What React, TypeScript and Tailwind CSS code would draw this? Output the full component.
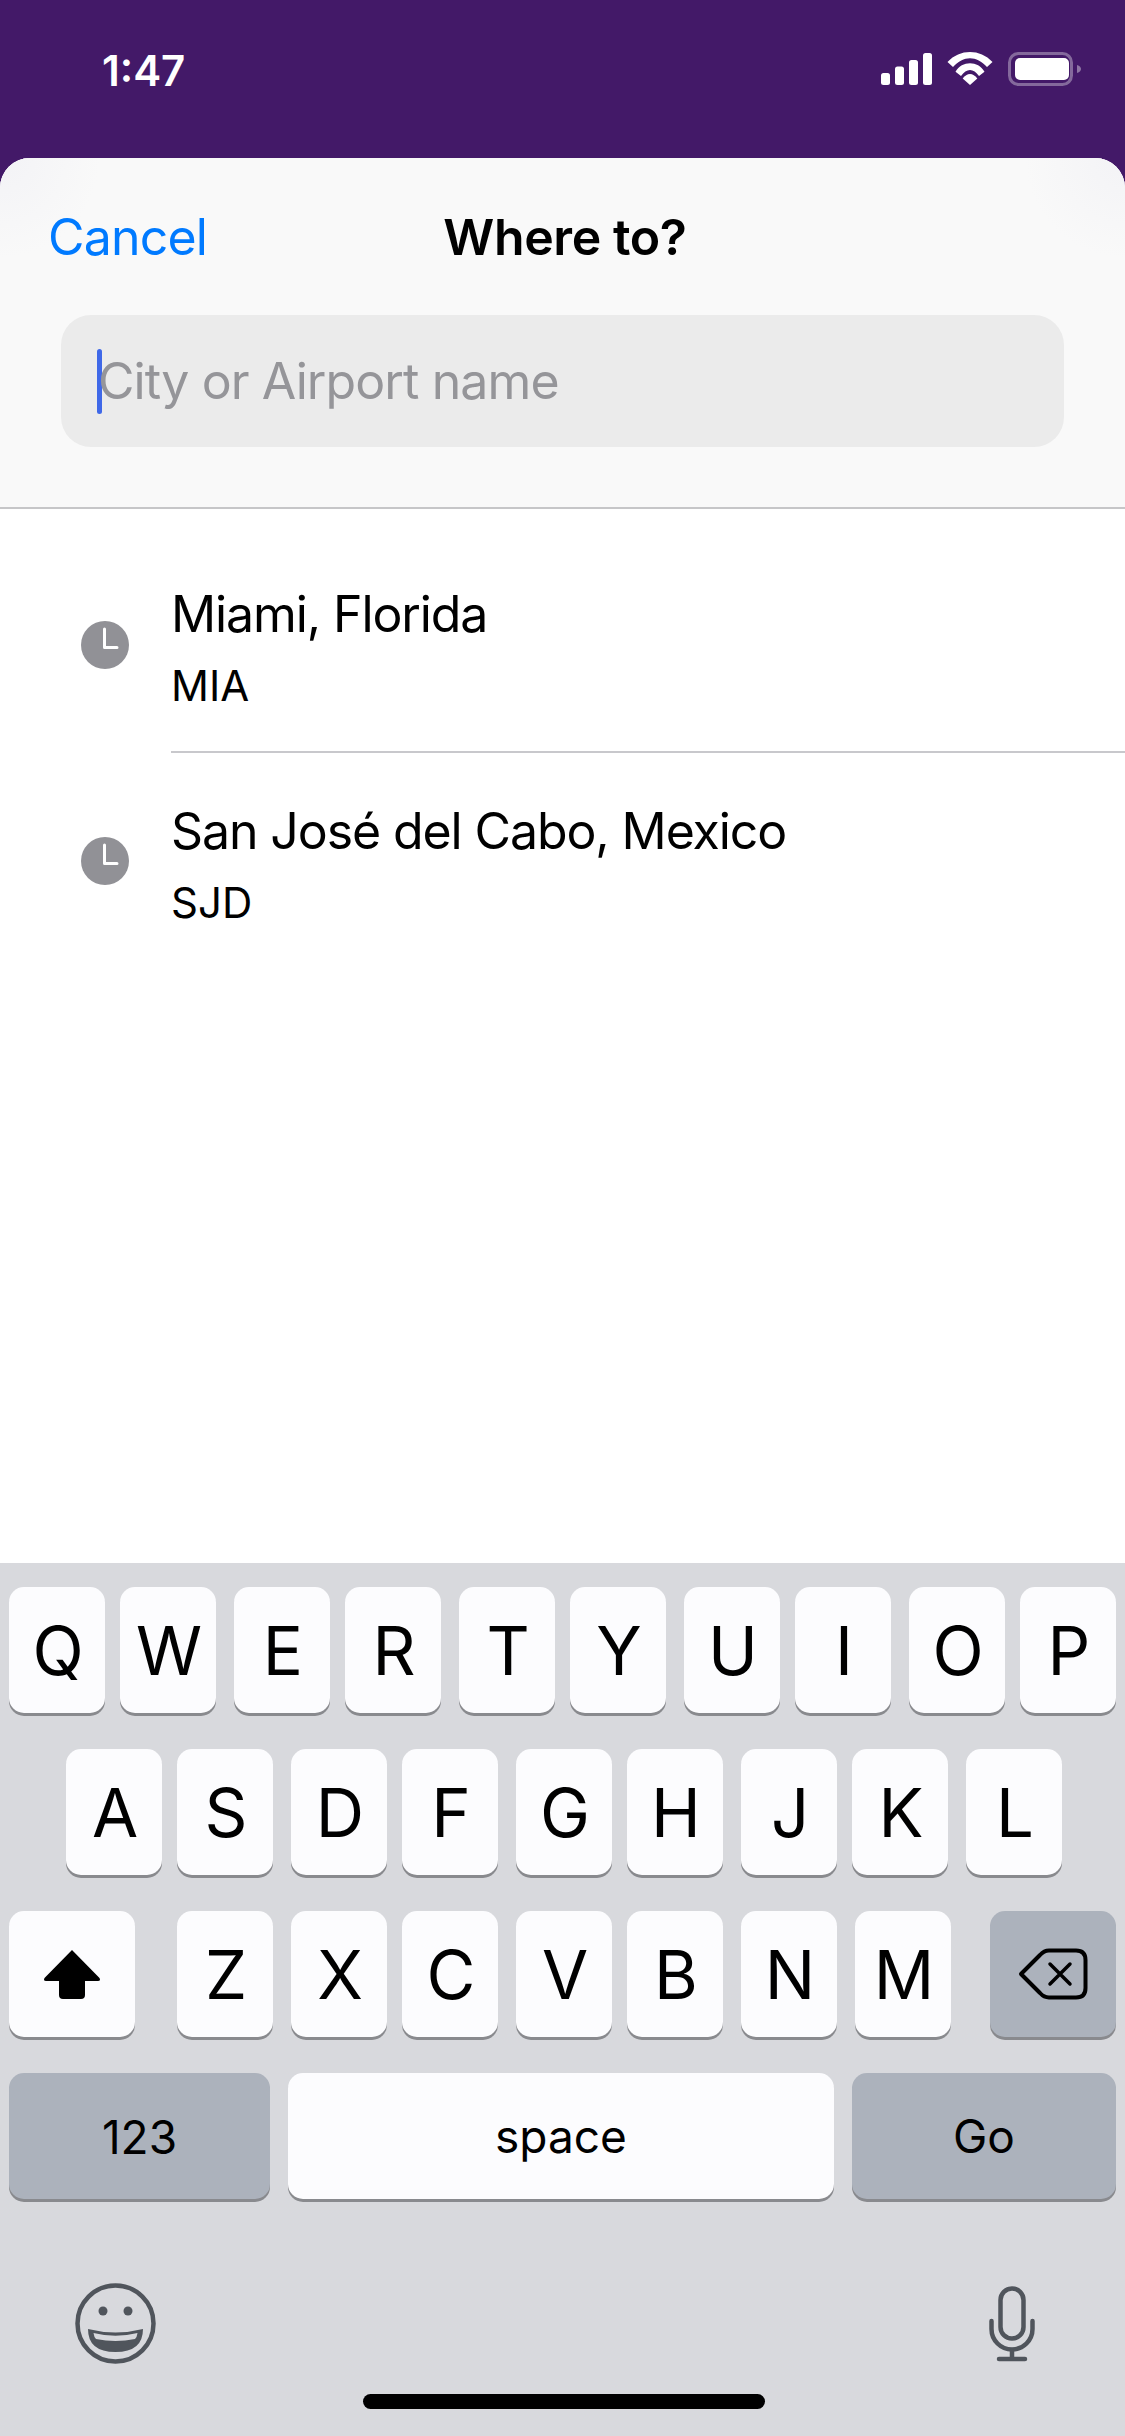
import type { ReactNode } from 'react';

const SHORT_GAP = 'ml-[15px]';
const LONG_GAP = 'ml-[18px]';

const topRow = 'QWERTYUIOP'.split('');
const homeRow = 'ASDFGHJKL'.split('');
const bottomRow = [
  { label: 'Z', gap: 'ml-[42px]' },
  { label: 'X', gap: LONG_GAP },
  { label: 'C', gap: SHORT_GAP },
  { label: 'V', gap: LONG_GAP },
  { label: 'B', gap: SHORT_GAP },
  { label: 'N', gap: LONG_GAP },
  { label: 'M', gap: LONG_GAP },
];

const recents = [
  { name: 'Miami, Florida', code: 'MIA' },
  { name: 'San José del Cabo, Mexico', code: 'SJD' },
];

function Key({ children, className = '' }: { children: ReactNode; className?: string }) {
  return (
    <div
      className={`flex h-[126px] items-center justify-center rounded-[15px] shadow-[0_3px_0_#898a8e] text-black ${className}`}
    >
      {children}
    </div>
  );
}

function Letter({ label, gap }: { label: string; gap: string }) {
  return (
    <Key className={`w-[96px] bg-[#fcfcfe] pl-[2px] pt-[3px] text-[67px] ${gap}`}>{label}</Key>
  );
}

function StatusIcons() {
  return (
    <svg width="200" height="34" viewBox="0 0 200 34" fill="none">
      <rect x="0" y="21" width="9" height="12" rx="2.5" fill="#fff" />
      <rect x="14" y="14.5" width="9" height="18.5" rx="2.5" fill="#fff" />
      <rect x="28" y="8" width="9" height="25" rx="2.5" fill="#fff" />
      <rect x="42" y="1" width="9" height="32" rx="2.5" fill="#fff" />
      <path d="M66.5 10 C79 -3.3 99 -3.3 111.5 10 L106 15 C95.5 3.2 82.5 3.2 72 15 Z" fill="#fff" />
      <path d="M74.5 19.7 C81 8.5 97 8.5 103.5 19.7 L98 24 C92.5 16 85.5 16 80 24 Z" fill="#fff" />
      <path d="M89 22 Q85 22 81.7 26.5 L89 33 L96.3 26.5 Q93 22 89 22 Z" fill="#fff" />
      <rect x="128.5" y="1.5" width="62" height="31" rx="9" stroke="#fff" strokeOpacity="0.35" strokeWidth="3" />
      <rect x="134" y="6" width="54" height="22" rx="5" fill="#fff" />
      <path d="M196 13 C199 14 200 15.5 200 17 C200 18.5 199 20 196 21 Z" fill="#fff" fillOpacity="0.4" />
    </svg>
  );
}

function ClockBadge() {
  return (
    <svg width="48" height="48" viewBox="0 0 48 48" className="shrink-0">
      <circle cx="24" cy="24" r="24" fill="#919196" />
      <path d="M23.5 8 V26.5 H36" fill="none" stroke="#fff" strokeWidth="3" strokeLinecap="round" strokeLinejoin="round" />
    </svg>
  );
}

function ShiftIcon() {
  return (
    <svg width="58" height="50" viewBox="0 0 58 50">
      <path
        d="M29 1 L56.5 29 Q58 32 55 32 H42 V46 Q42 50 38 50 H20 Q16 50 16 46 V32 H3 Q0 32 1.5 29 Z"
        fill="#000"
      />
    </svg>
  );
}

function BackspaceIcon() {
  return (
    <svg width="70" height="52" viewBox="0 0 70 52" fill="none" stroke="#000" strokeWidth="4" strokeLinecap="round" strokeLinejoin="round">
      <path d="M3 26 L22 7 Q26 2.5 31 2.5 H58 Q67.5 2.5 67.5 12 V40 Q67.5 49.5 58 49.5 H31 Q26 49.5 22 45 Z" />
      <path d="M32 16 L52 36 M52 16 L32 36" strokeWidth="3.5" />
    </svg>
  );
}

function EmojiIcon() {
  return (
    <svg width="81" height="81" viewBox="0 0 81 81" fill="none">
      <circle cx="40.5" cy="40.5" r="38" stroke="#50555c" strokeWidth="4.5" />
      <circle cx="28" cy="28" r="4.5" fill="#50555c" />
      <circle cx="53" cy="28" r="4.5" fill="#50555c" />
      <path d="M13 46 Q40.5 53 68 46 Q68 69 40.5 69 Q13 69 13 46 Z" fill="#50555c" />
      <path d="M18.5 50 Q40.5 55.5 62.5 50 Q62 54 60 56 Q40.5 60 21 56 Q19 54 18.5 50 Z" fill="#d8d9dd" />
    </svg>
  );
}

function MicIcon() {
  return (
    <svg width="46" height="76" viewBox="0 0 46 76" fill="none" stroke="#50555c" strokeWidth="4.5" strokeLinecap="round">
      <rect x="11.5" y="2.5" width="23" height="50" rx="11.5" />
      <path d="M2.5 35 V43 A20.5 20.5 0 0 0 43.5 43 V35" />
      <path d="M23 64 V73 M10 73 H36" />
    </svg>
  );
}

export default function App() {
  return (
    <div className="flex h-[2436px] w-[1125px] flex-col overflow-hidden bg-[#431968] font-[Inter,sans-serif]">
      {/* status bar */}
      <div className="flex h-[158px] shrink-0 items-start justify-between pl-[102px] pr-[44px] pt-[52px]">
        <span className="pt-[1px] text-[42px] leading-[36px] font-semibold text-white">1:47</span>
        <StatusIcons />
      </div>

      <div className="flex flex-1 flex-col overflow-hidden rounded-t-[30px] bg-white">
        {/* sheet header */}
        <div className="shrink-0 border-b-2 border-[#c6c6c8] bg-[#f9f9f9] bg-[radial-gradient(circle_at_0_0,#f3f3f6,transparent_100px),radial-gradient(circle_at_100%_0,#f3f3f6,transparent_100px)] pb-[60px]">
          <div className="grid h-[157px] grid-cols-[1fr_auto_1fr] items-center pl-[48px] pr-[43px]">
            <span className="text-[50px] leading-none tracking-[-0.8px] text-[#007aff]">Cancel</span>
            <span className="text-[50px] leading-none font-semibold tracking-[-0.4px] text-black">Where to?</span>
            <span />
          </div>
          <div className="mx-[61px] flex h-[132px] items-center rounded-[30px] bg-[#ebebeb] pl-[36px]">
            <div className="h-[65px] w-[5px] rounded-full bg-[#3f68e8]" />
            <span className="ml-[-4px] text-[50px] leading-none tracking-[-0.9px] text-[#959599]">
              City or Airport name
            </span>
          </div>
        </div>

        {/* recent searches */}
        <div className="flex-1 pt-[28px]">
          {recents.map((r, i) => (
            <div key={r.code} className="flex h-[216px] items-center pl-[81px]">
              <ClockBadge />
              <div
                className={`ml-[42px] flex h-full flex-1 flex-col justify-center pt-[6px] ${
                  i === 0 ? 'border-b-2 border-[#c8c8cc]' : ''
                }`}
              >
                <div className="text-[50px] leading-[62px] tracking-[-1.1px] text-black">{r.name}</div>
                <div className="mt-[16px] text-[42px] leading-[50px] text-black">{r.code}</div>
              </div>
            </div>
          ))}
        </div>

        {/* keyboard */}
        <div className="h-[873px] shrink-0 bg-[#d8d9dd] px-[9px] pt-[24px]">
          <div className="flex flex-col gap-[36px]">
            <div className="flex">
              {topRow.map((k, i) => (
                <Letter key={k} label={k} gap={i === 0 ? '' : i % 2 ? SHORT_GAP : LONG_GAP} />
              ))}
            </div>
            <div className="flex pl-[57px]">
              {homeRow.map((k, i) => (
                <Letter key={k} label={k} gap={i === 0 ? '' : i % 2 ? SHORT_GAP : LONG_GAP} />
              ))}
            </div>
            <div className="flex">
              <Key className="w-[126px] bg-[#fcfcfe]">
                <ShiftIcon />
              </Key>
              {bottomRow.map((k) => (
                <Letter key={k.label} label={k.label} gap={k.gap} />
              ))}
              <Key className="ml-[39px] w-[126px] bg-[#acb2bc]">
                <BackspaceIcon />
              </Key>
            </div>
            <div className="flex">
              <Key className="w-[261px] bg-[#acb2bc] pt-[2px] text-[46px]">123</Key>
              <Key className="ml-[18px] w-[546px] bg-[#fcfcfe] text-[46px]">space</Key>
              <Key className="ml-[18px] w-[264px] bg-[#acb2bc] text-[46px]">Go</Key>
            </div>
          </div>

          <div className="mt-[84px] flex items-start justify-between pl-[66px] pr-[81px]">
            <EmojiIcon />
            <div className="mt-[3px]">
              <MicIcon />
            </div>
          </div>
          <div className="ml-[354px] mt-[30px] h-[15px] w-[402px] rounded-full bg-black" />
        </div>
      </div>
    </div>
  );
}
